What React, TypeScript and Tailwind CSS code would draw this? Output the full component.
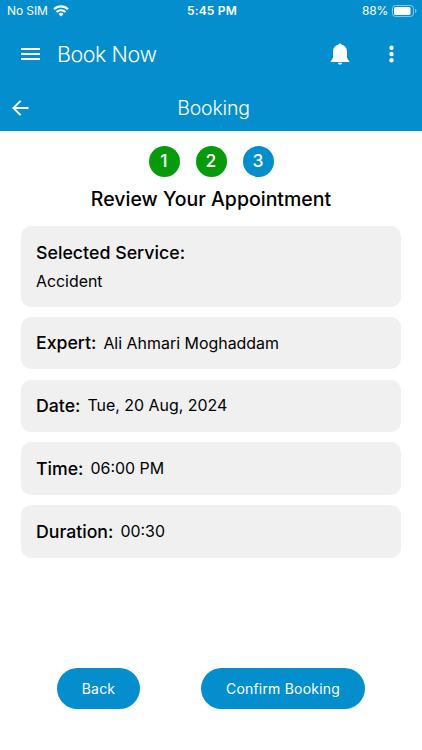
import { ReactElement } from "react";

const details = [
  { label: "Expert:", value: "Ali Ahmari Moghaddam" },
  { label: "Date:", value: "Tue, 20 Aug, 2024" },
  { label: "Time:", value: "06:00 PM" },
  { label: "Duration:", value: "00:30" },
];

function StatusBar(): ReactElement {
  return (
    <div className="grid h-[22px] grid-cols-3 items-center pl-[7px] pr-[5px] text-[12px] leading-[22px]">
      <div className="flex items-center gap-[5px]">
        <span className="tracking-[-0.1px]">No SIM</span>
        <svg width="16" height="12" viewBox="0 0 16 12" fill="none">
          <path d="M1 4.300a10 10 0 0 1 14 0" stroke="white" strokeWidth="2.200" />
          <path d="M3.500 7a6.400 6.400 0 0 1 9 0" stroke="white" strokeWidth="2" />
          <path d="M8 11.500 5.500 9a3.600 3.600 0 0 1 5 0z" fill="white" />
        </svg>
      </div>
      <span className="text-center font-semibold tracking-[0.2px]">5:45 PM</span>
      <div className="flex items-center justify-end gap-[4px]">
        <span className="tracking-[-0.2px]">88%</span>
        <svg width="25" height="12" viewBox="0 0 25 12" fill="none">
          <rect x="0.5" y="0.5" width="21" height="11" rx="3" stroke="white" strokeOpacity="0.5" />
          <rect x="2" y="2" width="16.5" height="8" rx="1.5" fill="white" />
          <path d="M23 4v4c.9-.4 1.4-1.100 1.400-2S23.900 4.400 23 4z" fill="white" fillOpacity="0.5" />
        </svg>
      </div>
    </div>
  );
}

function Header(): ReactElement {
  return (
    <header className="h-[130.500px] bg-[#048ecd] text-white">
      <StatusBar />
      <div className="flex h-[63px] items-center pl-[21px] pr-[28px]">
        <svg width="19" height="14" viewBox="0 0 19 14" stroke="white" strokeWidth="2">
          <path d="M0 2h19M0 7h19M0 12h19" />
        </svg>
        <h1 className="ml-[17px] text-[21.500px] font-light leading-7 tracking-[-0.45px]">Book Now</h1>
        <svg className="ml-auto" width="20" height="22" viewBox="0 0 20 22" fill="white">
          <path d="M10 .4c-.9 0-1.500.6-1.700 1.400C5 2.500 3 5 3 8.400v5.200c0 1.600-.5 2.700-1.500 3.600L.8 17.900v1.200h18.400v-1.200l-.7-.7c-1-.9-1.500-2-1.500-3.600V8.400c0-3.400-2-5.900-5.300-6.600C11.500 1 10.900.4 10 .4z" />
          <path d="M7.900 19.700h4.200c-.2 1.200-1 1.900-2.100 1.900s-1.900-.7-2.100-1.900z" />
        </svg>
        <svg className="ml-[39px]" width="5" height="18" viewBox="0 0 5 18" fill="white">
          <circle cx="2.500" cy="2.800" r="2.200" />
          <circle cx="2.500" cy="9" r="2.200" />
          <circle cx="2.500" cy="15.200" r="2.200" />
        </svg>
      </div>
      <div className="grid h-[46px] grid-cols-[40px_1fr_40px] items-center">
        <svg
          className="ml-3"
          width="17"
          height="16"
          viewBox="0 0 17 16"
          fill="none"
          stroke="white"
          strokeWidth="1.900"
        >
          <path d="M16.500 8H1.500M8.600.8 1.400 8l7.200 7.200" />
        </svg>
        <h2 className="pl-[5px] text-center text-[19.500px] font-light leading-6 tracking-[-0.2px]">Booking</h2>
      </div>
    </header>
  );
}

function Steps(): ReactElement {
  return (
    <div className="flex justify-center gap-4 text-[17.500px] font-medium leading-none text-white">
      <span className="flex size-[31px] items-center justify-center rounded-full bg-[#079b0b]">1</span>
      <span className="flex size-[31px] items-center justify-center rounded-full bg-[#079b0b]">2</span>
      <span className="flex size-[31px] items-center justify-center rounded-full bg-[#048ecd]">3</span>
    </div>
  );
}

export default function App(): ReactElement {
  return (
    <div className="flex h-[750px] w-[422px] flex-col bg-white font-['Inter',sans-serif] text-black">
      <Header />
      <main className="flex flex-1 flex-col px-[21px] pt-[15px]">
        <Steps />
        <h3 className="mt-[10px] text-center text-[19.500px] font-medium leading-6">
          Review Your Appointment
        </h3>
        <div className="mt-[15.500px] flex flex-col gap-[10.300px]">
          <div className="h-[80.500px] rounded-[10px] bg-[#f0f0f0] px-[15px] pt-[15px]">
            <p className="text-[17.800px] font-medium leading-6">Selected Service:</p>
            <p className="mt-[5px] text-[15.900px] leading-6">Accident</p>
          </div>
          {details.map((item) => (
            <div
              key={item.label}
              className="flex h-[52.500px] items-center gap-[7px] rounded-[10px] bg-[#f0f0f0] px-[15px] pt-px"
            >
              <span className="text-[17.700px] font-medium">{item.label}</span>
              <span className="text-[15.950px]">{item.value}</span>
            </div>
          ))}
        </div>
        <div className="mb-[41px] mt-auto flex justify-between px-[36px] text-[14px] tracking-[0.2px] text-white">
          <button className="h-[41px] w-[83px] rounded-full bg-[#048ecd]">Back</button>
          <button className="h-[41px] w-[164px] rounded-full bg-[#048ecd]">Confirm Booking</button>
        </div>
      </main>
    </div>
  );
}
